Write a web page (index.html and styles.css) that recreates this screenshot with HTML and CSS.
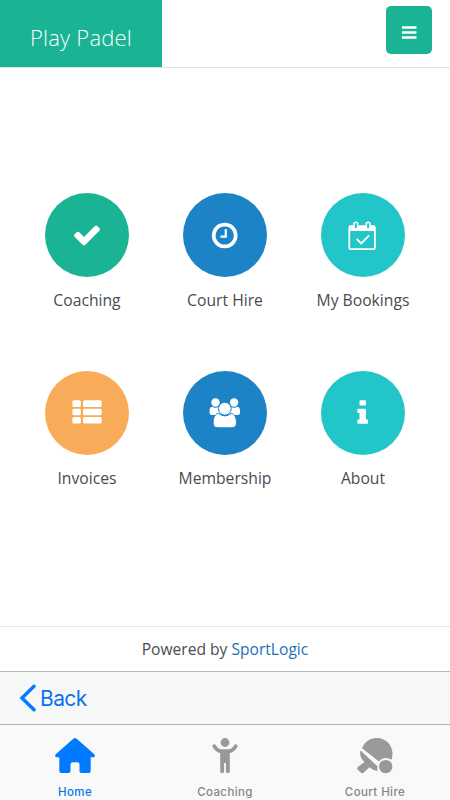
FILE: index.html
```html
<!DOCTYPE html>
<html lang="en">
<head>
<meta charset="utf-8">
<title>Play Padel</title>
<link rel="stylesheet" href="styles.css">
</head>
<body>
<div class="app">
  <header class="header">
    <div class="brand"><span class="brand-name">Play Padel</span></div>
    <button class="menu" aria-label="Menu"><svg width="46" height="48" viewBox="0 0 46 48"><path d="M16 21.500h14.500M16 26.500h14.500M16 31.500h14.500" stroke="#fff" stroke-width="2.500"/></svg></button>
  </header>
  <main class="grid">
    <a class="tile"><span class="circle green"><svg viewBox="0 0 84 84"><path transform="translate(27 27) scale(.01674)" d="M1671 566q0 40-28 68l-724 724-136 136q-28 28-68 28t-68-28l-136-136-362-362q-28-28-28-68t28-68l136-136q28-28 68-28t68 28l294 295 656-657q28-28 68-28t68 28l136 136q28 28 28 68z"/></svg></span><span class="label">Coaching</span></a>
    <a class="tile"><span class="circle blue"><svg viewBox="0 0 84 84"><path transform="translate(26.700 27.500) scale(.01674)" d="M1024 544v448q0 14-9 23t-23 9h-320q-14 0-23-9t-9-23v-64q0-14 9-23t23-9h224v-352q0-14 9-23t23-9h64q14 0 23 9t9 23zm416 352q0-148-73-273t-198-198-273-73-273 73-198 198-73 273 73 273 198 198 273 73 273-73 198-198 73-273zm224 0q0 209-103 385.500t-279.500 279.500-385.500 103-385.500-103-279.500-279.500-103-385.500 103-385.500 279.500-279.500 385.500-103 385.500 103 279.500 279.500 103 385.500z"/></svg></span><span class="label">Court Hire</span></a>
    <a class="tile"><span class="circle teal"><svg viewBox="0 0 84 84"><g transform="translate(0 .5)"><rect x="28.300" y="33" width="25.600" height="22.700" rx="1.500" fill="none" stroke="#fff" stroke-width="1.800"/><path d="M28 32h26v5.500H28z"/><rect x="33" y="28.700" width="3.600" height="6.800" rx="1.800" fill="#23c6c8" stroke="#fff" stroke-width="1.600"/><rect x="45.300" y="28.700" width="3.600" height="6.800" rx="1.800" fill="#23c6c8" stroke="#fff" stroke-width="1.600"/><path d="M35.700 45.500l4.500 4.500 8-8.200" fill="none" stroke="#fff" stroke-width="1.800"/></g></svg></span><span class="label">My Bookings</span></a>
    <a class="tile"><span class="circle orange"><svg viewBox="0 0 84 84"><rect x="27.400" y="29.200" width="8.500" height="6.700" rx="1.500"/><rect x="38" y="29.200" width="18.700" height="6.700" rx="1.500"/><rect x="27.400" y="37.700" width="8.500" height="6.500" rx="1.500"/><rect x="38" y="37.700" width="18.700" height="6.500" rx="1.500"/><rect x="27.400" y="46" width="8.500" height="6.500" rx="1.500"/><rect x="38" y="46" width="18.700" height="6.500" rx="1.500"/></svg></span><span class="label">Invoices</span></a>
    <a class="tile"><span class="circle blue"><svg viewBox="0 0 84 84"><circle cx="32.500" cy="31.500" r="4.200"/><circle cx="51.100" cy="31.500" r="4.200"/><path d="M29 35.700q3.500 2.300 7 0L38 44H29q-2.500 0-2.500-3c0-3 .6-5.300 2.500-5.300zM54.600 35.700q-3.500 2.300-7 0L45.600 44h9q2.500 0 2.500-3c0-3-.6-5.300-2.500-5.300z"/><path d="M35.500 42.500q6.300 4.800 12.600 0c3.500 0 5.400 4.500 5.400 9.300q0 5-5 5H35.100q-5 0-5-5c0-4.800 1.900-9.300 5.400-9.300z" stroke="#1c84c6" stroke-width="1"/><circle cx="41.800" cy="37.700" r="6.400" stroke="#1c84c6" stroke-width="1"/></svg></span><span class="label">Membership</span></a>
    <a class="tile"><span class="circle teal"><svg viewBox="0 0 84 84"><path transform="translate(26.700 27) scale(.01674)" d="M1216 1344v128q0 26-19 45t-45 19h-512q-26 0-45-19t-19-45v-128q0-26 19-45t45-19h64v-384h-64q-26 0-45-19t-19-45v-128q0-26 19-45t45-19h384q26 0 45 19t19 45v576h64q26 0 45 19t19 45zm-128-1152v192q0 26-19 45t-45 19h-256q-26 0-45-19t-19-45v-192q0-26 19-45t45-19h256q26 0 45 19t19 45z"/></svg></span><span class="label">About</span></a>
  </main>
  <footer class="powered"><span>Powered by <a class="link">SportLogic</a></span></footer>
  <div class="backbar"><svg width="18" height="28" viewBox="0 0 18 28"><path d="M15 2.200L3 14l12 11.800" fill="none" stroke="#007aff" stroke-width="3.400" stroke-linecap="round"/></svg><span class="back">Back</span></div>
  <nav class="tabs">
    <a class="tab active"><svg width="40" height="36" viewBox="0 0 40 36"><path d="M18.300.8q1.700-1.400 3.400 0L39 16q1.200 1.200.8 2.300T38 19.200h-2.300V33q0 2-2 2H26.500q-2 0-2-2v-6.500q0-2.200-2.200-2.200h-4.600q-2.200 0-2.200 2.200V33q0 2-2 2H6.300q-2 0-2-2V19.200H2Q.6 19.200.2 18.300T1 16z"/></svg><span>Home</span></a>
    <a class="tab"><svg width="26" height="36" viewBox="0 0 26 36"><circle cx="13" cy="4.500" r="4.400"/><path d="M2.300 8.200q2.500 4.600 6.700 5.200h8q4.200-.6 6.700-5.200" fill="none" stroke="#999" stroke-width="3.800" stroke-linecap="round"/><path d="M8.200 11.500h9.600V33.200a1.950 1.950 0 0 1-3.900 0V25h-1.800v8.200a1.950 1.950 0 0 1-3.900 0z"/></svg><span>Coaching</span></a>
    <a class="tab"><svg width="36" height="36" viewBox="0 0 36 36"><path d="M5 10.300C7.500 4 13 .1 20 .1c8.500 0 15.500 7 15.500 15.500q0 3-1 6.200-2.800-1.800-5.500-1.800-4.200 0-7 3.400z"/><path d="M3.600 12.500L20.500 28.300q-.5 2.300.1 4.700-5-.5-8.100-3.700l-6 5.400q-1.200 1-2.400 0l-3.300-3q-1.200-1.300 0-2.600L7.500 24Q1.700 18.500 3.600 12.500z"/><circle cx="28.700" cy="28.600" r="6.700"/></svg><span>Court Hire</span></a>
  </nav>
</div>
</body>
</html>
```
FILE: styles.css
```css
* { box-sizing: border-box; }
body { margin: 0; background: #fff; font-family: "Open Sans", sans-serif; color: #484c50; }
.app { width: 450px; height: 800px; display: flex; flex-direction: column; overflow: hidden; }
.header { height: 68px; flex: none; display: flex; justify-content: space-between; border-bottom: 1px solid #dfe2e4; }
.brand { width: 162.400px; height: 67px; background: #1ab394; color: #f8fffe; padding: 22px 0 0 30px; }
.brand-name { display: block; font-size: 22px; line-height: 30px; font-weight: 300; letter-spacing: .2px; white-space: nowrap; }
.menu { width: 46px; height: 48px; margin: 6px 18px 0 0; padding: 0; border: 0; border-radius: 5px; background: #1ab394; }
.menu svg { display: block; }
.grid { height: 557.500px; flex: none; padding: 125.400px 18px 0; display: grid; grid-template-columns: repeat(3, 138px); grid-auto-rows: 177.500px; align-content: start; }
.tile { display: flex; flex-direction: column; align-items: center; }
.circle { width: 84px; height: 84px; border-radius: 50%; }
.circle svg { display: block; fill: #fff; }
.green { background: #1ab394; }
.blue { background: #1c84c6; }
.teal { background: #23c6c8; }
.orange { background: #f8ac59; }
.label { margin-top: 11px; font-size: 15.700px; line-height: 24px; white-space: nowrap; }
.powered { height: 45.500px; flex: none; border-top: 1px solid #e4e6e7; display: flex; align-items: center; justify-content: center; font-size: 15.600px; padding-top: 1px; }
.link { color: #1c70b4; }
.backbar { height: 54px; flex: none; border-top: 1px solid #b9b9bb; border-bottom: 1px solid #b0b2b4; background: #f6f8f7; display: flex; align-items: center; padding-left: 19px; font-family: Inter, sans-serif; color: #0a72f0; }
.back { margin: 2px 0 0 3px; font-size: 21px; line-height: 28px; letter-spacing: -.6px; }
.tabs { flex: 1; background: #f9f9f9; display: grid; grid-template-columns: repeat(3, 150px); font-family: Inter, sans-serif; font-size: 11.500px; font-weight: 500; color: #858585; }
.tab { display: flex; flex-direction: column; align-items: center; padding-top: 13px; }
.tab svg { fill: #999; }
.tab span { line-height: 14px; margin-top: 11px; letter-spacing: .4px; white-space: nowrap; }
.active { color: #0876e8; }
.active svg { fill: #007aff; }
```
